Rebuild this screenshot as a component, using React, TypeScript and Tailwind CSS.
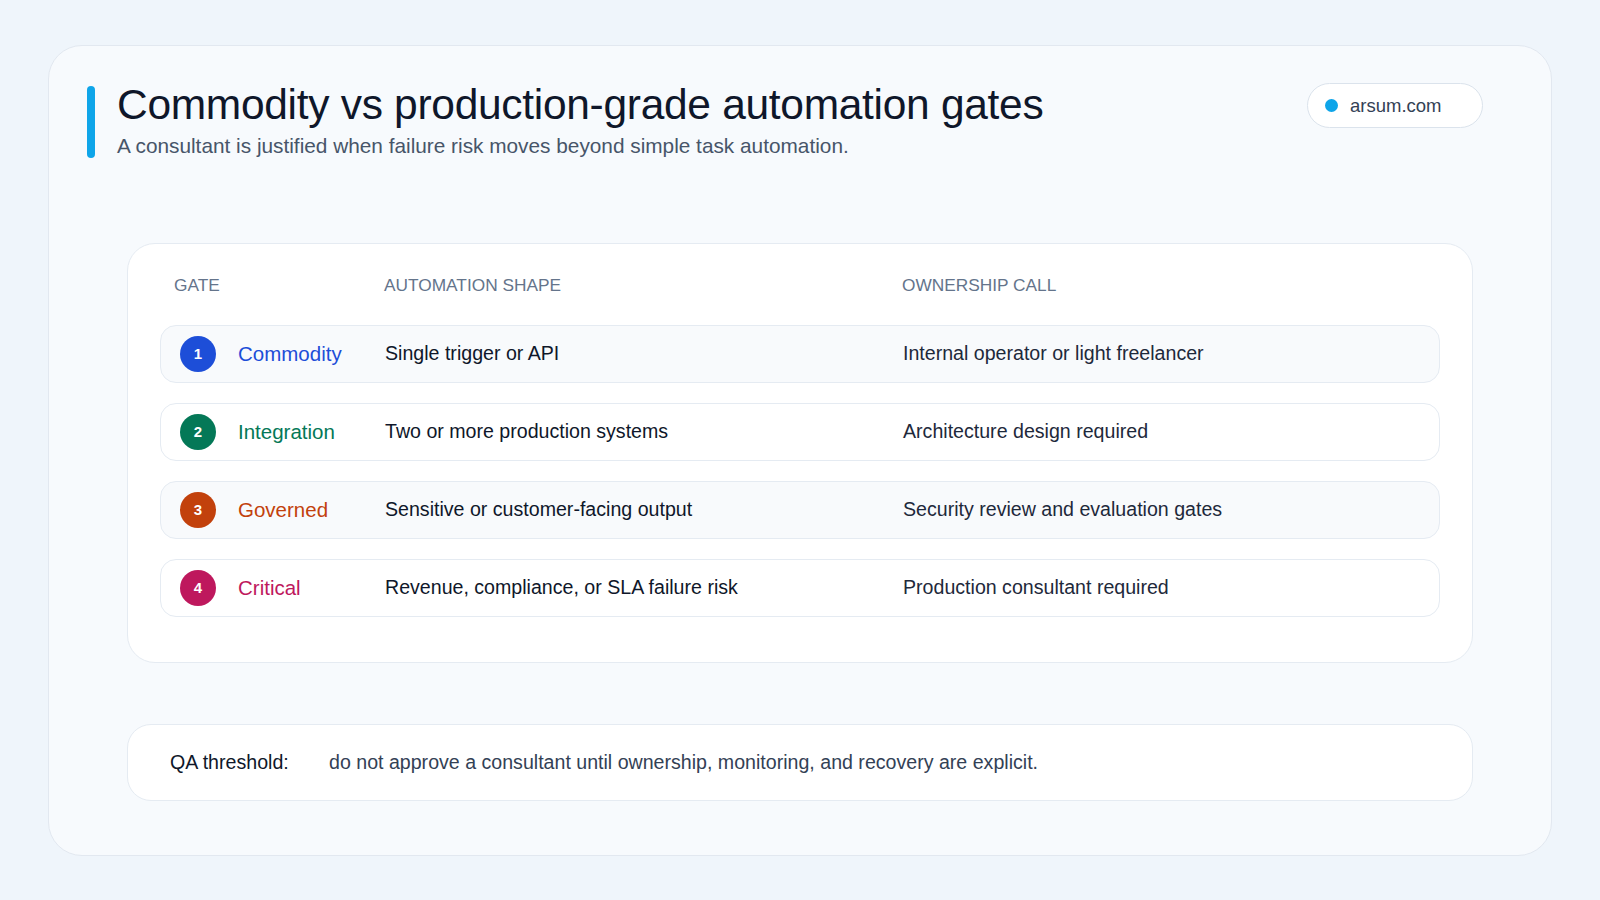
const rows = [
  { n: "1", name: "Commodity", c: "bg-[#1d4ed8]", t: "text-[#1d4ed8]", shape: "Single trigger or API", own: "Internal operator or light freelancer", bg: "bg-[#f8fafc]" },
  { n: "2", name: "Integration", c: "bg-[#047857]", t: "text-[#047857]", shape: "Two or more production systems", own: "Architecture design required", bg: "bg-white" },
  { n: "3", name: "Governed", c: "bg-[#c2410c]", t: "text-[#c2410c]", shape: "Sensitive or customer-facing output", own: "Security review and evaluation gates", bg: "bg-[#f8fafc]" },
  { n: "4", name: "Critical", c: "bg-[#be185d]", t: "text-[#be185d]", shape: "Revenue, compliance, or SLA failure risk", own: "Production consultant required", bg: "bg-white" },
];

export default function App() {
  return (
    <div className="w-[1600px] h-[900px] bg-[#eff5fb] pt-[45px] pl-[48px]" style={{ fontFamily: "'Liberation Sans', Arial, sans-serif" }}>
      <div className="w-[1504px] h-[811px] rounded-[34px] border border-[#e2e8f0] bg-[#f7fafd] pt-[36px] px-[38px]">
        <div className="flex items-start justify-between">
          <div className="flex gap-[22px]">
            <div className="w-[8px] h-[72px] mt-[4px] rounded-full bg-[#0ea5e9]" />
            <div>
              <h1 className="text-[42.5px] leading-[46px] text-[#0f172a] tracking-[-0.3px]">Commodity vs production-grade automation gates</h1>
              <p className="text-[20.8px] leading-[26px] text-[#475569] mt-[5px]">A consultant is justified when failure risk moves beyond simple task automation.</p>
            </div>
          </div>
          <div className="mt-[1px] mr-[30px] w-[176px] h-[45px] rounded-full border border-[#dbe3ec] bg-white flex items-center pl-[17px] gap-[12px]">
            <span className="w-[13px] h-[13px] rounded-full bg-[#0ea5e9]" />
            <span className="text-[18.5px] text-[#334155]">arsum.com</span>
          </div>
        </div>

        <div className="mt-[84px] mx-[40px] h-[420px] rounded-[28px] border border-[#e5ebf2] bg-white px-[32px] pt-[30px]">
          <div className="flex text-[17.3px] text-[#64748b] h-[24px] items-center">
            <div className="w-[224px] pl-[14px]">GATE</div>
            <div className="w-[518px]">AUTOMATION SHAPE</div>
            <div>OWNERSHIP CALL</div>
          </div>
          <div className="mt-[27px] flex flex-col gap-[20px]">
            {rows.map((r) => (
              <div key={r.n} className={`h-[58px] rounded-[16px] border border-[#e5ebf2] ${r.bg} flex items-center text-[19.6px]`}>
                <div className="w-[224px] flex items-center pl-[19px] gap-[22px]">
                  <span className={`w-[36px] h-[36px] rounded-full ${r.c} text-white text-[15px] font-bold flex items-center justify-center`}>{r.n}</span>
                  <span className={`text-[20.5px] ${r.t}`}>{r.name}</span>
                </div>
                <div className="w-[518px] text-[#0f172a]">{r.shape}</div>
                <div className="text-[#1e293b]">{r.own}</div>
              </div>
            ))}
          </div>
        </div>

        <div className="mt-[61px] mx-[40px] h-[77px] rounded-[24px] border border-[#e5ebf2] bg-white flex items-center pl-[42px] text-[19.6px]">
          <span className="w-[159px] text-[#0f172a]">QA threshold:</span>
          <span className="text-[#334155]">do not approve a consultant until ownership, monitoring, and recovery are explicit.</span>
        </div>
      </div>
    </div>
  );
}
